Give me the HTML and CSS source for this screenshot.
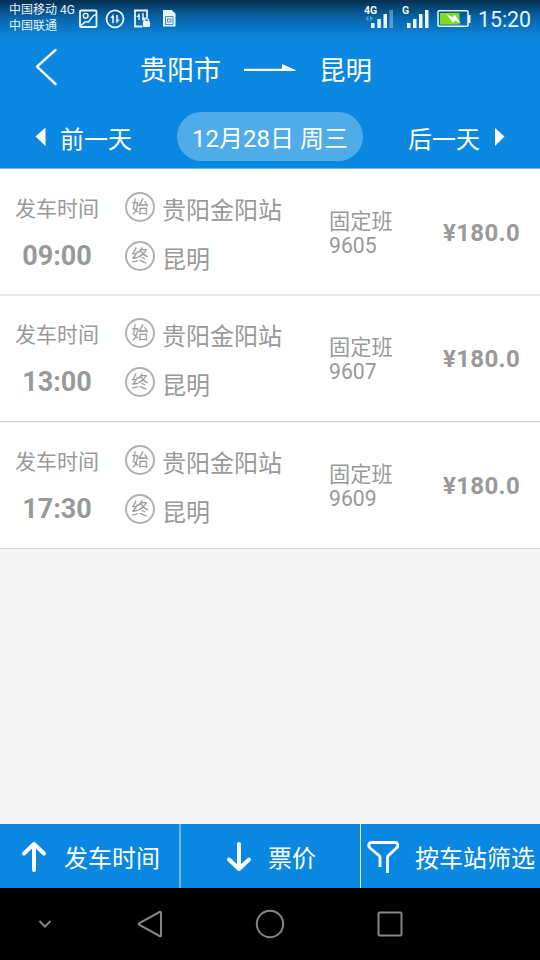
FILE: index.html
```
<!DOCTYPE html>
<html lang="zh-CN">
<head>
<meta charset="utf-8">
<title>贵阳市 — 昆明</title>
<link rel="stylesheet" href="styles.css">
</head>
<body>
<div class="screen">
  <header class="header">
    <div class="status">
      <div class="carriers"><span>中国移动 4G</span><span>中国联通</span></div>
      <svg class="notices" width="100" height="20" viewBox="0 0 100 20" fill="none" stroke="#e8f5ff" stroke-width="1.8">
        <rect x="1" y="1.5" width="16.5" height="16.5" rx="1"/>
        <circle cx="6.7" cy="6.8" r="2.4" stroke-width="1.4"/>
        <path d="M2 16.5 L6 13 C8 12 9 14 10 12.5 C12 9 14 6 17 5.5" stroke-width="1.6"/>
        <circle cx="36" cy="9.8" r="8.5"/>
        <path d="M34 14V7M38 6V13" stroke-width="1.6"/>
        <path d="M31.300 9L34.300 5 34.800 9ZM37.200 10.500H40.700L37.700 14.500Z" fill="#e8f5ff" stroke="none"/>
        <path d="M68 9V1.500H56V17.500H63.500"/>
        <path d="M60 11V5M64 4V11" stroke-width="1.500"/>
        <path d="M57.300 8L60.300 4 60.800 8ZM63.200 8.500H66.700L63.700 12.500Z" fill="#e8f5ff" stroke="none"/>
        <path d="M65.700 12.500V11.500A1.900 1.900 0 0 1 69.500 11.500V12.500" stroke-width="1.400"/>
        <rect x="64" y="12" width="7" height="6" rx="1" fill="#e8f5ff" stroke="none"/>
        <path d="M84 1H92.500L96.500 4.500V17.500H84Z" fill="#e8f5ff" stroke="none"/>
        <path d="M86.500 7.500H94V15.500H86.500ZM88.500 10H92V13H88.500Z" stroke="#3682b5" stroke-width=".9"/>
      </svg>
      <svg class="signals" width="110" height="28" viewBox="0 0 110 28">
        <g fill="#eef8ff">
          <text x="1" y="14" class="net">4G</text>
          <text x="39" y="14" class="net">G</text>
          <rect x="8" y="23" width="3.500" height="5"/><rect x="14.300" y="19" width="3.500" height="9"/><rect x="20.500" y="14" width="3.500" height="14"/>
          <rect x="26.500" y="10" width="3.500" height="18" opacity=".35"/>
          <rect x="44" y="23" width="3.500" height="5"/><rect x="50" y="19" width="3.500" height="9"/><rect x="56" y="14" width="3.500" height="14"/><rect x="62" y="10" width="3.500" height="18"/>
          <path d="M2.500 18.500L5.500 15.500V21.500ZM10 18.500L7 15.500V21.500Z" opacity=".35"/>
        </g>
        <rect x="75" y="10.800" width="30" height="15.500" rx="1" fill="none" stroke="#eef8ff" stroke-width="1.500"/>
        <rect x="105" y="15" width="2.500" height="8" fill="#eef8ff"/>
        <rect x="77" y="13" width="19.500" height="11.500" fill="#80dc28"/>
        <path d="M83.500 14L90 17.500 91.500 14.500 98 23.500 92 20.500 90 23Z" fill="#fff"/>
      </svg>
      <span class="clock">15:20</span>
    </div>
    <div class="route">
      <svg class="back" width="24" height="38" viewBox="0 0 24 38"><path d="M20.500 2L2 18.700 20.500 36" fill="none" stroke="#fff" stroke-width="2.400" stroke-linecap="round" stroke-linejoin="round"/></svg>
      <span class="from">贵阳市</span>
      <svg class="arrow" width="52" height="10" viewBox="0 0 52 10"><path d="M0 4.700H38V0L51.500 6V7H0Z" fill="#fff"/></svg>
      <span class="to">昆明</span>
    </div>
    <div class="days">
      <svg width="11" height="20" viewBox="0 0 11 20"><path d="M10.500 .5V19L.5 9.500Z" fill="#fff"/></svg>
      <span class="prev">前一天</span>
      <span class="date">12月28日 周三</span>
      <span class="next">后一天</span>
      <svg width="10" height="20" viewBox="0 0 10 20"><path d="M0 1V19L9.500 9.500Z" fill="#fff"/></svg>
    </div>
  </header>
  <main class="list">
    <section class="trip">
      <div class="depart"><span>发车时间</span><strong>09:00</strong></div>
      <div class="stops"><div class="stop"><i class="mark">始</i><span>贵阳金阳站</span></div><div class="stop"><i class="mark">终</i><span>昆明</span></div></div>
      <div class="bus"><span>固定班</span><span>9605</span></div>
      <strong class="price">¥180.0</strong>
    </section>
    <section class="trip">
      <div class="depart"><span>发车时间</span><strong>13:00</strong></div>
      <div class="stops"><div class="stop"><i class="mark">始</i><span>贵阳金阳站</span></div><div class="stop"><i class="mark">终</i><span>昆明</span></div></div>
      <div class="bus"><span>固定班</span><span>9607</span></div>
      <strong class="price">¥180.0</strong>
    </section>
    <section class="trip">
      <div class="depart"><span>发车时间</span><strong>17:30</strong></div>
      <div class="stops"><div class="stop"><i class="mark">始</i><span>贵阳金阳站</span></div><div class="stop"><i class="mark">终</i><span>昆明</span></div></div>
      <div class="bus"><span>固定班</span><span>9609</span></div>
      <strong class="price">¥180.0</strong>
    </section>
  </main>
  <div class="tools">
    <div class="tool time"><svg width="26" height="32" viewBox="0 0 26 32"><path d="M13 29V3M3 12.500L13 3 23 12.500" class="thick"/></svg><span>发车时间</span></div>
    <div class="tool fare"><svg width="26" height="32" viewBox="0 0 26 32"><path d="M13 3V28M3 18.500L13 28 23 18.500" class="thick"/></svg><span>票价</span></div>
    <div class="tool filter"><svg width="32" height="34" viewBox="0 0 32 34"><path d="M13 27V17.500Q13 16.500 12 15.500L3 8C.5 5.500 2 2.500 5 2.500H27.500C31 2.500 32 5.500 29.500 8L21.500 15.500Q20.500 16.500 20.500 17.500V33" fill="none" stroke="#fff" stroke-width="2.900" stroke-linejoin="round"/></svg><span>按车站筛选</span></div>
  </div>
  <nav class="nav">
    <svg width="14" height="10" viewBox="0 0 14 10"><path d="M1.500 2L7 7.500 12.500 2" stroke-width="2"/></svg>
    <svg width="26" height="30" viewBox="0 0 26 30"><path d="M22.500 3Q24 2.400 24 4V26Q24 27.600 22.500 27L2.500 16Q1 15 2.500 14Z" stroke-width="2"/></svg>
    <svg width="30" height="30" viewBox="0 0 30 30"><circle cx="15" cy="15" r="13.200" stroke-width="2"/></svg>
    <svg width="26" height="26" viewBox="0 0 26 26"><rect x="1.500" y="1.500" width="23" height="23" rx="1" stroke-width="2"/></svg>
  </nav>
</div>
</body>
</html>
```
FILE: styles.css
```
* { box-sizing: border-box; }
body { margin: 0; font-family: Roboto, "Noto Sans CJK SC", sans-serif; }
svg { display: block; flex: none; }
span, strong { white-space: nowrap; }
.screen { width: 540px; height: 960px; display: flex; flex-direction: column; background: #f4f4f4; overflow: hidden; }
.header { height: 169px; flex: none; color: #fff; border-bottom: 1px solid #78afd6; background: linear-gradient(#04304f 0, #0763a5 17px, #0a85de 36px, #0a87e0 42px); }
.status { height: 38px; display: flex; align-items: flex-start; color: #e8f5ff; }
.carriers { width: 79px; padding: 2px 0 0 9px; display: flex; flex-direction: column; font-size: 12px; line-height: 16px; }
.notices { margin-top: 9px; }
.signals { margin-left: 184px; }
.net { font: bold 10.500px Roboto, sans-serif; }
.clock { margin-left: 5px; font-size: 21.300px; line-height: 40px; }
.route { height: 66px; display: flex; align-items: center; font-size: 27px; line-height: 40px; padding: 0 0 4px 35px; }
.from, .to { padding-top: 4px; }
.from { margin-left: 80px; }
.back { margin: -4px 1px 0 0; }
.arrow { margin-left: 23px; }
.to { margin-left: 23px; font-size: 26.500px; }
.days { height: 64px; display: flex; align-items: center; padding: 1px 0 0 35px; font-size: 24px; line-height: 48px; }
.prev, .next { padding-top: 6px; }
.prev { margin-left: 14px; }
.date { width: 186px; height: 49px; margin-left: 45px; padding-top: 3px; border-radius: 25px; background: #50abe9; text-align: center; }
.next { margin: 0 15px 0 45px; }
.list { flex: 1; color: #999; }
.trip { height: 127px; display: flex; align-items: flex-start; background: #fff; border-bottom: 1px solid #d6d6d6; }
.trip:first-child { height: 126px; border-color: #e8e8e8; }
.trip:nth-child(2) { box-shadow: inset 0 1px #e8e8e8; }
.trip:nth-child(3) { box-shadow: inset 0 1px #efefef; }
.depart { width: 125px; padding: 23px 0 0 15px; display: flex; flex-direction: column; font-size: 21px; line-height: 32px; }
.depart span { position: relative; top: .5px; }
.depart strong { width: 84px; margin-top: 16px; text-align: center; font-size: 27px; }
.stops { width: 204px; padding-top: 22px; display: flex; flex-direction: column; gap: 17px; font-size: 24px; line-height: 32px; }
.stop { display: flex; align-items: center; gap: 7px; height: 32px; }
.stop span { padding-top: 8px; }
.mark { width: 30px; height: 30px; border: 2px solid #b0b0b0; border-radius: 50%; font-style: normal; font-size: 17px; line-height: 27px; text-align: center; }
.bus { width: 114px; padding-top: 41px; display: flex; flex-direction: column; font-size: 21.200px; line-height: 24px; }
.price { padding-top: 48px; font-size: 24px; line-height: 32px; letter-spacing: .35px; }
.tools { height: 64px; flex: none; display: grid; grid-template-columns: 181px 180px 179px; background: #0a87e0; color: #fff; font-size: 24px; line-height: 60px; }
.tool { display: flex; align-items: center; }
.tool span { padding-top: 5px; }
.time, .fare { border-right: 2px solid #6cb7ec; }
.fare { border-right: 1px solid #d5ecfb; }
.time { padding-left: 21px; }
.time span { margin-left: 17px; }
.fare { padding-left: 45px; }
.fare span { margin-left: 16px; }
.filter { padding-left: 6px; }
.filter span { margin-left: 16px; padding-top: 4px; }
.thick { fill: none; stroke: #fff; stroke-width: 4; stroke-linecap: round; stroke-linejoin: round; }
.nav { height: 72px; flex: none; display: flex; align-items: center; padding-left: 38px; background: #000; }
.nav svg { fill: none; stroke: #858585; }
.nav svg:nth-child(2) { margin-left: 85px; }
.nav svg:nth-child(3) { margin-left: 92px; }
.nav svg:nth-child(4) { margin-left: 92px; }
```
